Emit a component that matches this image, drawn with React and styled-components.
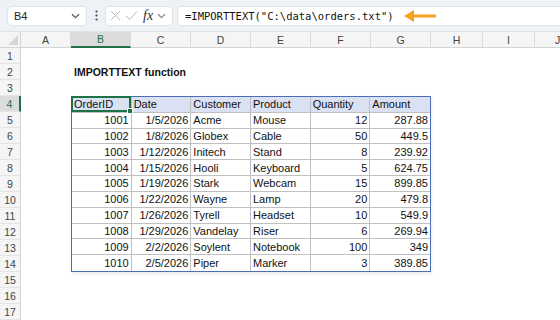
import React from "react";
import styled, { createGlobalStyle, css } from "styled-components";

const GlobalStyle = createGlobalStyle`
    html, body {
        margin: 0;
        padding: 0;
        background: #ffffff;
    }
    body {
        width: 560px;
        height: 320px;
        overflow: hidden;
        font-family: "Liberation Sans", Arial, sans-serif;
    }
`;

const GREEN = "#1e7145";

const Toolbar = styled.div`
    display: flex;
    align-items: center;
    height: 31px;
    padding: 0 0 0 7px;
    background: #eef1f5;
    border-bottom: 1px solid #dfe3e8;
`;

const Box = styled.div`
    display: flex;
    align-items: center;
    height: 20px;
    box-sizing: border-box;
    background: #ffffff;
    border: 1px solid #e1e4e8;
    border-radius: 4px;
`;

const NameBox = styled(Box)`
    width: 80px;
    padding: 0 6px;
    justify-content: space-between;
    font-size: 11px;
    color: #222;
`;

const Dots = styled.div`
    width: 18px;
    display: flex;
    justify-content: center;
`;

const FxBox = styled(Box)`
    width: 68px;
    padding: 0 3px 0 4px;
    gap: 4px;
`;

const FormulaBox = styled(Box)`
    flex: 1;
    margin-left: 4px;
    padding-left: 7px;
    border-right: none;
    border-radius: 4px 0 0 4px;
    gap: 9px;
    font-family: "DejaVu Sans Mono", "Liberation Mono", monospace;
    font-size: 10.5px;
    color: #111;
    white-space: pre;
`;

const Fx = styled.span`
    font-family: "Liberation Serif", "Times New Roman", serif;
    font-style: italic;
    font-size: 14px;
    color: #333;
    margin-left: 1px;
    line-height: 1;
`;

const Sheet = styled.div`
    display: grid;
    grid-template-columns: 21px 50px repeat(6, 60px) 52px 52px 46px;
    grid-template-rows: repeat(18, 16px);
    font-size: 11px;
`;

const Corner = styled.div`
    position: relative;
    background: #f5f5f5;
    border-right: 1px solid #d4d4d4;
    border-bottom: 1px solid #d4d4d4;
    &::after {
        content: "";
        position: absolute;
        right: 2px;
        bottom: 2px;
        border-left: 10px solid transparent;
        border-bottom: 10px solid #d6d6d6;
    }
`;

const ColHead = styled.div`
    display: flex;
    align-items: center;
    justify-content: center;
    background: #f5f5f5;
    border-right: 1px solid #dcdcdc;
    border-bottom: 1px solid #d4d4d4;
    color: #444;
    font-size: 10.5px;
    ${(p) =>
        p.$active &&
        css`
            background: #dcdcdc;
            color: ${GREEN};
            border-bottom: 2px solid ${GREEN};
        `}
`;

const RowHead = styled.div`
    display: flex;
    align-items: center;
    justify-content: center;
    background: #f5f5f5;
    border-right: 1px solid #d4d4d4;
    border-bottom: 1px solid #e4e4e4;
    color: #444;
    font-size: 10.5px;
    ${(p) =>
        p.$active &&
        css`
            background: #dcdcdc;
            color: ${GREEN};
            border-right: 2px solid ${GREEN};
        `}
`;

const Title = styled.div`
    grid-column: 3 / span 4;
    grid-row: 3;
    display: flex;
    align-items: center;
    padding-left: 3px;
    font-weight: bold;
    font-size: 10.5px;
    color: #111;
`;

const Table = styled.div`
    grid-column: 3 / span 6;
    grid-row: 5 / span 11;
    position: relative;
    display: grid;
    grid-template-columns: repeat(6, 1fr);
    grid-template-rows: repeat(11, 1fr);
    border: 1px solid #4a6fb5;
    box-shadow: 1px 2px 3px rgba(0, 0, 0, 0.08);
`;

const Cell = styled.div`
    display: flex;
    align-items: center;
    justify-content: ${(p) => (p.$num ? "flex-end" : "flex-start")};
    padding: 0 2px;
    border-right: ${(p) => (p.$lastCol ? "none" : "1px solid #c0c0c0")};
    border-bottom: ${(p) => (p.$lastRow ? "none" : "1px solid #c0c0c0")};
    background: ${(p) => (p.$head ? "#d9e1f2" : "#ffffff")};
    color: #111;
    white-space: nowrap;
    overflow: hidden;
`;

const Selection = styled.div`
    position: absolute;
    left: -1px;
    top: -1px;
    width: 60px;
    height: 16px;
    box-sizing: border-box;
    border: 2px solid ${GREEN};
    pointer-events: none;
    &::after {
        content: "";
        position: absolute;
        right: -4px;
        bottom: -4px;
        width: 4px;
        height: 4px;
        background: ${GREEN};
        border: 1px solid #fff;
    }
`;

const columns = [
    { label: "A" },
    { label: "B", active: true },
    { label: "C" },
    { label: "D" },
    { label: "E" },
    { label: "F" },
    { label: "G" },
    { label: "H" },
    { label: "I" },
    { label: "J" },
];

const header = ["OrderID", "Date", "Customer", "Product", "Quantity", "Amount"];
const numeric = [true, true, false, false, true, true];

const orders = [
    ["1001", "1/5/2026", "Acme", "Mouse", "12", "287.88"],
    ["1002", "1/8/2026", "Globex", "Cable", "50", "449.5"],
    ["1003", "1/12/2026", "Initech", "Stand", "8", "239.92"],
    ["1004", "1/15/2026", "Hooli", "Keyboard", "5", "624.75"],
    ["1005", "1/19/2026", "Stark", "Webcam", "15", "899.85"],
    ["1006", "1/22/2026", "Wayne", "Lamp", "20", "479.8"],
    ["1007", "1/26/2026", "Tyrell", "Headset", "10", "549.9"],
    ["1008", "1/29/2026", "Vandelay", "Riser", "6", "269.94"],
    ["1009", "2/2/2026", "Soylent", "Notebook", "100", "349"],
    ["1010", "2/5/2026", "Piper", "Marker", "3", "389.85"],
];

function Chevron({ color = "#555" }) {
    return (
        <svg width="9" height="6" viewBox="0 0 9 6">
            <path d="M1 1.2 L4.5 4.6 L8 1.2" fill="none" stroke={color} strokeWidth="1.2" />
        </svg>
    );
}

function App() {
    return (
        <>
            <GlobalStyle />
            <Toolbar>
                <NameBox>
                    <span>B4</span>
                    <Chevron />
                </NameBox>
                <Dots>
                    <svg width="3" height="11" viewBox="0 0 3 11">
                        <circle cx="1.5" cy="1.5" r="1.1" fill="#444" />
                        <circle cx="1.5" cy="5.5" r="1.1" fill="#444" />
                        <circle cx="1.5" cy="9.5" r="1.1" fill="#444" />
                    </svg>
                </Dots>
                <FxBox>
                    <svg width="11" height="11" viewBox="0 0 11 11">
                        <path d="M1 1 L10 10 M10 1 L1 10" stroke="#b8b8b8" strokeWidth="1" fill="none" />
                    </svg>
                    <svg width="13" height="11" viewBox="0 0 13 11">
                        <path d="M1 6 L4.5 9.5 L12 1.5" stroke="#b8b8b8" strokeWidth="1" fill="none" />
                    </svg>
                    <Fx>fx</Fx>
                    <Chevron color="#888" />
                </FxBox>
                <FormulaBox>
                    <span>=IMPORTTEXT("C:\data\orders.txt")</span>
                    <svg width="34" height="14" viewBox="0 0 34 14">
                        <path d="M33 7 H9" stroke="#f5a31a" strokeWidth="3" />
                        <path d="M1 7 L11 1 L11 13 Z" fill="#f5a31a" />
                    </svg>
                </FormulaBox>
            </Toolbar>
            <Sheet>
                <Corner />
                {columns.map((c) => (
                    <ColHead key={c.label} $active={c.active}>
                        {c.label}
                    </ColHead>
                ))}
                {Array.from({ length: 17 }, (_, i) => (
                    <RowHead key={i} $active={i === 3} style={{ gridRow: i + 2 }}>
                        {i + 1}
                    </RowHead>
                ))}
                <Title>IMPORTTEXT function</Title>
                <Table>
                    {header.map((h, c) => (
                        <Cell key={h} $head $lastCol={c === 5}>
                            {h}
                        </Cell>
                    ))}
                    {orders.map((row, r) =>
                        row.map((v, c) => (
                            <Cell
                                key={r + "-" + c}
                                $num={numeric[c]}
                                $lastCol={c === 5}
                                $lastRow={r === orders.length - 1}
                            >
                                {v}
                            </Cell>
                        ))
                    )}
                    <Selection />
                </Table>
            </Sheet>
        </>
    );
}

export default App;
